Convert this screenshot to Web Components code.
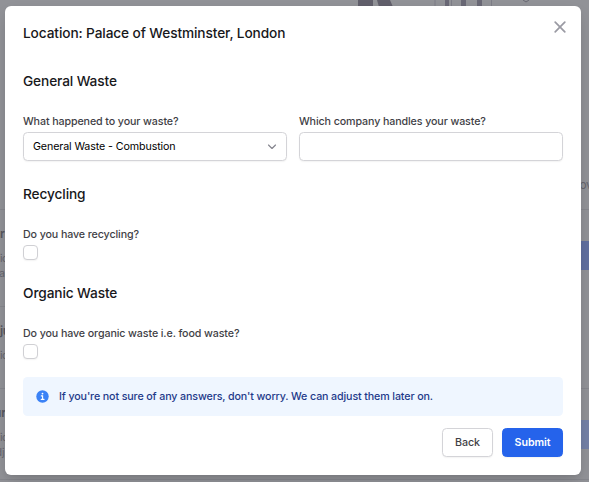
<!DOCTYPE html>
<html lang="en"><head><meta charset="utf-8"><title>Waste details</title>
<style>
html,body{margin:0;height:100%;overflow:hidden}
body{font-family:Inter,"Liberation Sans",sans-serif;background:#919297;color:#18181b}
</style></head><body>
<waste-page></waste-page>
<script>
const define=(name,html)=>customElements.define(name,class extends HTMLElement{
  constructor(){super();const t=document.createElement('template');t.innerHTML=html;this.attachShadow({mode:'open'}).append(t.content.cloneNode(true));}
});
define('page-backdrop',`<style>
:host{position:absolute;inset:0;overflow:hidden;font-size:10.700px;line-height:14px;color:#66666e}
span,i,svg{position:absolute;white-space:nowrap}
.b{font-weight:600;color:#57575f;font-size:12px}
i{background:#86878d;height:1px;width:8px}
.blue{background:#606f9f;width:10px;height:29px;left:579px}
svg{left:340px;top:0}
</style>
<svg width="200" height="7"><path d="M18 0h15v7H18zM37 0h13l3 7H39z" fill="#615f6b"/><path d="M105 0h4v7h-4zM121 0h5v7h-5zM137 0h5v7h-5z" fill="#696875"/><path d="M95 0v7M111.500 0v7M151.500 0v7" stroke="#7d7d87"/><path d="M183 0l3 2 3-2" fill="none" stroke="#696973"/></svg>
<span class="b" style="left:0;top:227px">r</span><span style="left:0;top:252px;letter-spacing:-.5px">ic</span><span style="left:-1px;top:267px">a</span>
<span class="b" style="left:0;top:324px;letter-spacing:-.5px">ju</span><span style="left:0;top:349px;letter-spacing:-.5px">ic</span>
<span class="b" style="left:-6px;top:406px">ur</span><span style="left:0;top:431px;letter-spacing:-.5px">ic</span><span style="left:-4.500px;top:446px">dj</span>
<span style="left:579.500px;top:178px;font-size:12px;letter-spacing:-.5px">ov</span>
<i style="left:0;top:209px"></i><i style="left:0;top:306px"></i><i style="left:0;top:388px"></i><i style="left:0;top:479px;width:589px"></i>
<i style="left:581px;top:209px"></i><i style="left:581px;top:388px"></i>
<i class="blue" style="top:241px"></i><i class="blue" style="top:420px;background:#7481a6"></i>`);
define('close-icon',`<style>:host{display:block;width:12px;height:12px}svg{display:block}</style><svg width="12" height="12" viewBox="0 0 12 12"><path d="M1.200 1.200l9.600 9.600M10.800 1.200L1.200 10.800" stroke="#9a9aa3" stroke-width="1.700" stroke-linecap="round"/></svg>`);
define('section-title',`<style>:host{display:block;height:20px;line-height:20px;font-size:13.700px;font-weight:500;letter-spacing:-.115px;white-space:nowrap}</style><slot></slot>`);
define('form-field',`<style>:host{display:block;font-size:10.700px;font-weight:500;letter-spacing:-.11px;color:#3f3f46}
label{display:block;height:15px;line-height:15px;margin-bottom:3px;white-space:nowrap}</style><label><slot name="label"></slot></label><slot></slot>`);
define('text-box',`<style>:host{display:flex;box-sizing:border-box;height:29px;border:1px solid #d4d4d8;border-radius:4.500px;box-shadow:0 1px 1.500px #0000000d;padding:0 9px;align-items:center;justify-content:space-between;font-size:10.700px;font-weight:400;color:#000;background:#fff}</style><slot></slot>`);
define('chevron-icon',`<style>:host{display:block}svg{display:block}</style><svg width="10" height="6" viewBox="0 0 10 6"><path d="M1.500 1L5 4.500 8.500 1" fill="none" stroke="#85858e" stroke-width="1.150" stroke-linecap="round" stroke-linejoin="round"/></svg>`);
define('check-box',`<style>:host{display:block;box-sizing:border-box;width:15px;height:15px;border:1px solid #d0d0d4;border-radius:4px;box-shadow:0 1px 1.500px #0000000d;background:#fff}</style>`);
define('info-alert',`<style>:host{display:flex;box-sizing:border-box;height:39px;padding-left:13px;gap:10px;align-items:center;border-radius:4.500px;background:#eff6ff;color:#1e3a8a;font-size:10.700px;font-weight:500;letter-spacing:-.125px;white-space:nowrap}</style>
<svg width="13" height="13" viewBox="0 0 13 13"><circle cx="6.500" cy="6.500" r="6.200" fill="#3b82f6"/><circle cx="6.500" cy="3.600" r=".9" fill="#fff"/><path d="M5.300 5.900h1.300v3.300M5.200 9.400h2.800" fill="none" stroke="#fff" stroke-width="1.100" stroke-linecap="round"/></svg><span><slot></slot></span>`);
define('action-button',`<style>:host{display:block;height:29px}button{display:block;box-sizing:border-box;width:51px;height:29px;padding:0;border:1px solid #d4d4d8;border-radius:4.500px;background:#fff;color:#3f3f46;box-shadow:0 1px 1.500px #0000000d;font:500 10.700px/27px Inter,"Liberation Sans",sans-serif;letter-spacing:-.1px}
:host([primary]) button{width:61px;border-color:#2563eb;background:#2563eb;color:#fff;font-weight:600}</style><button><slot></slot></button>`);
define('modal-dialog',`<style>:host{display:block;position:absolute;left:5px;top:6px;width:576px;height:469px;box-sizing:border-box;padding:17px 18px 0;background:#fff;border-radius:6px;box-shadow:0 8px 18px -3px #00000024,0 3px 6px -2px #00000018}
close-icon{position:absolute;right:15px;top:15px}
.first{margin-top:28px}.row{display:grid;grid-template-columns:1fr 1fr;gap:12px;margin-top:23px}.next{margin-top:23px}.check{margin-top:23px}.organic{margin-top:23px}info-alert{margin-top:18px}footer{display:flex;justify-content:flex-end;gap:9px;margin-top:12px}</style>
<close-icon></close-icon><section-title>Location: Palace of Westminster, London</section-title>
<section-title class="first">General Waste</section-title>
<div class="row"><form-field><span slot="label">What happened to your waste?</span><text-box><span>General Waste - Combustion</span><chevron-icon></chevron-icon></text-box></form-field><form-field><span slot="label">Which company handles your waste?</span><text-box></text-box></form-field></div>
<section-title class="next">Recycling</section-title>
<form-field class="check"><span slot="label">Do you have recycling?</span><check-box></check-box></form-field>
<section-title class="organic">Organic Waste</section-title>
<form-field class="check"><span slot="label">Do you have organic waste i.e. food waste?</span><check-box></check-box></form-field>
<info-alert>If you're not sure of any answers, don't worry. We can adjust them later on.</info-alert>
<footer><action-button>Back</action-button><action-button primary>Submit</action-button></footer>`);
define('waste-page',`<style>:host{display:block;position:relative;width:589px;height:482px;overflow:hidden}</style><page-backdrop></page-backdrop><modal-dialog></modal-dialog>`);
</script></body></html>
